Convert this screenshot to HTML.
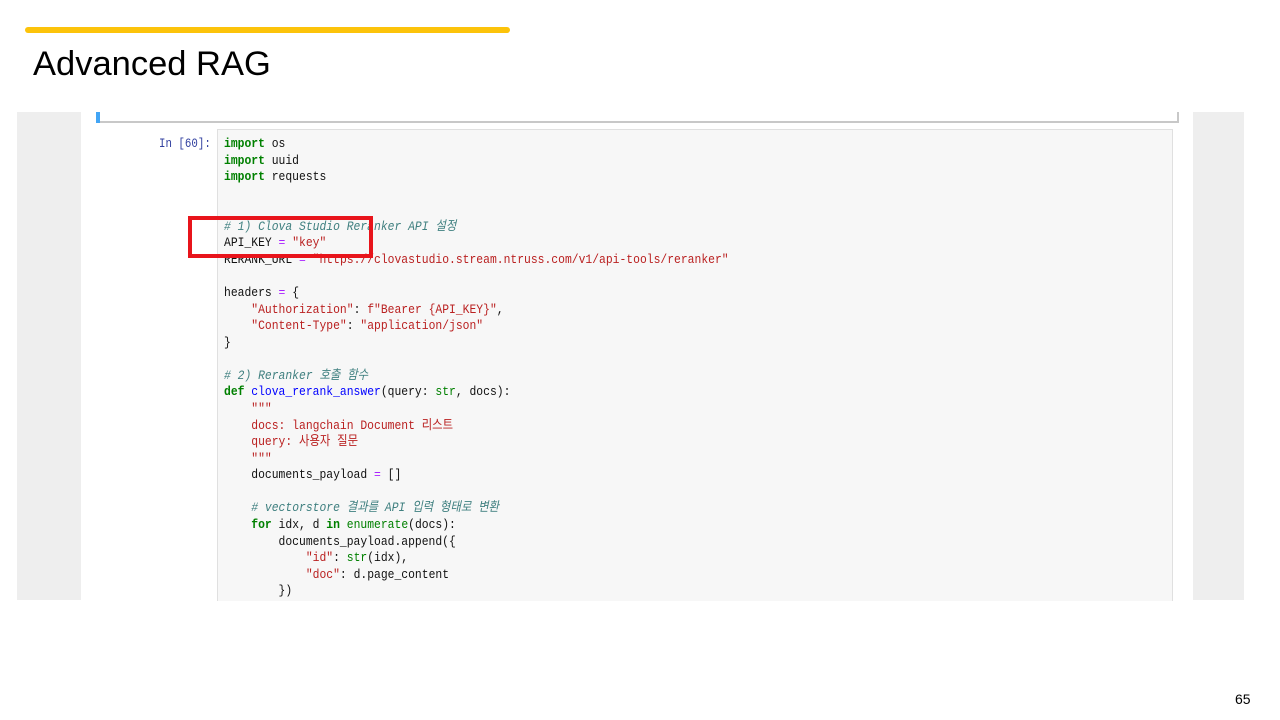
<!DOCTYPE html>
<html><head><meta charset="utf-8"><style>
body{margin:0;width:1280px;height:720px;background:#fff;position:relative;overflow:hidden;font-family:"Liberation Sans","Noto Sans CJK KR",sans-serif}
.abs{position:absolute}
pre{margin:0;font-family:"Liberation Mono","Noto Sans CJK KR",monospace;font-size:13px;line-height:16.57px;color:#111;transform:scaleX(0.874);transform-origin:0 0}
.k{color:#008000;font-weight:bold}.s{color:#ba2121}.c{color:#408080;font-style:italic}.o{color:#aa22ff}.f{color:#0000ff}.b{color:#008000}
</style></head><body>
<div class="abs" style="left:25px;top:27px;width:485px;height:6px;background:#fcc30a;border-radius:3px"></div>
<div class="abs" style="left:33px;top:44px;font-size:34.5px;color:#000;line-height:40px">Advanced RAG</div>
<div class="abs" style="left:17px;top:112px;width:1227px;height:488px;background:#eee"></div>
<div class="abs" style="left:81px;top:112px;width:1112px;height:488px;background:#fff"></div>
<div class="abs" style="left:96px;top:121px;width:1082px;height:2px;background:#c8c8c8"></div>
<div class="abs" style="left:1177px;top:112px;width:2px;height:11px;background:#c8c8c8"></div>
<div class="abs" style="left:96px;top:112px;width:4px;height:11px;background:#42a5f5"></div>
<div class="abs" style="left:159px;top:136px;font-family:'Liberation Mono',monospace;font-size:13px;color:#303f9f;transform:scaleX(0.83);transform-origin:0 0">In [60]:</div>
<div class="abs" style="left:217px;top:129px;width:954px;height:471px;background:#f7f7f7;border:1px solid #e0e0e0;border-bottom:none"></div>
<pre class="abs" style="left:224px;top:136px"><span class="k">import</span> os
<span class="k">import</span> uuid
<span class="k">import</span> requests


<span class="c"># 1) Clova Studio Reranker API 설정</span>
API_KEY <span class="o">=</span> <span class="s">"key"</span>
RERANK_URL <span class="o">=</span> <span class="s">"https://clovastudio.stream.ntruss.com/v1/api-tools/reranker"</span>

headers <span class="o">=</span> {
    <span class="s">"Authorization"</span>: <span class="s">f"Bearer {API_KEY}"</span>,
    <span class="s">"Content-Type"</span>: <span class="s">"application/json"</span>
}

<span class="c"># 2) Reranker 호출 함수</span>
<span class="k">def</span> <span class="f">clova_rerank_answer</span>(query: <span class="b">str</span>, docs):
    <span class="s">"""</span>
<span class="s">    docs: langchain Document 리스트</span>
<span class="s">    query: 사용자 질문</span>
<span class="s">    """</span>
    documents_payload <span class="o">=</span> []

    <span class="c"># vectorstore 결과를 API 입력 형태로 변환</span>
    <span class="k">for</span> idx, d <span class="k">in</span> <span class="b">enumerate</span>(docs):
        documents_payload.append({
            <span class="s">"id"</span>: <span class="b">str</span>(idx),
            <span class="s">"doc"</span>: d.page_content
        })</pre>
<div class="abs" style="left:188px;top:216px;width:177px;height:34px;border:4px solid #e8141b"></div>
<div class="abs" style="left:1235px;top:691px;font-size:14px;color:#000">65</div>
</body></html>
